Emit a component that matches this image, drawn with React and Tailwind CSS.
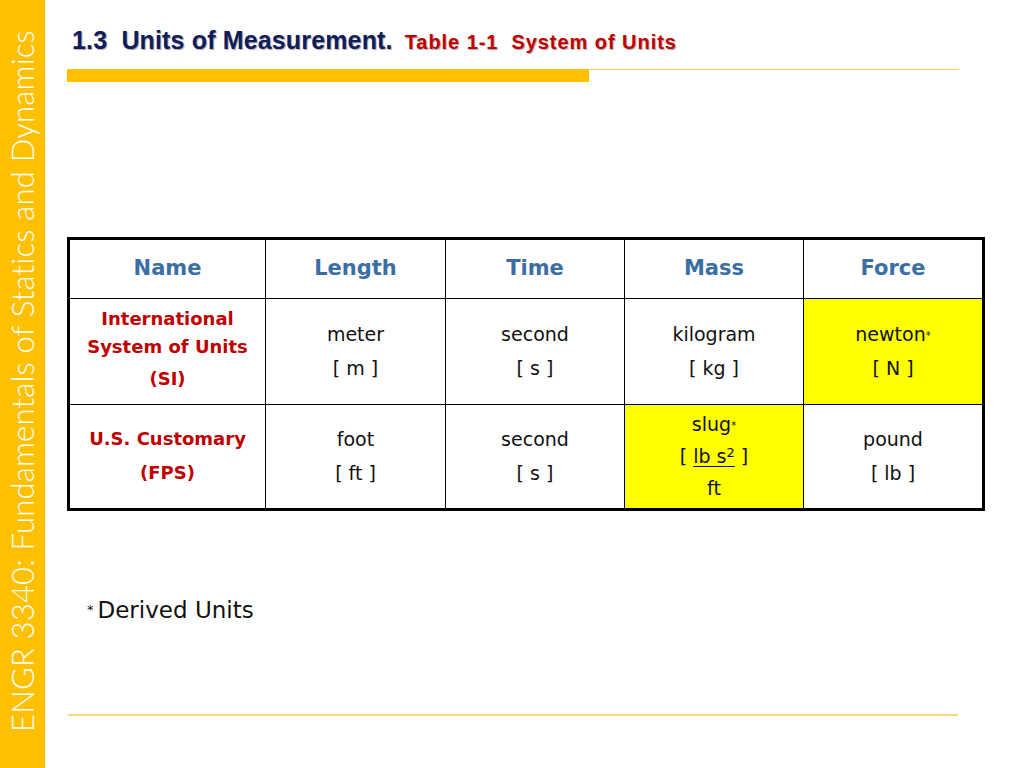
import React from "react";

const body = { fontFamily: '"DejaVu Sans", "Liberation Sans", sans-serif' };

function Cell({ children, yellow, className = "" }) {
  return (
    <td
      className={`border border-black text-center align-middle text-[19px] leading-[34px] text-[#111] ${yellow ? "bg-[#ffff00]" : "bg-white"} ${className}`}
      style={body}
    >
      {children}
    </td>
  );
}

function Head({ children }) {
  return (
    <th
      className="border border-black text-center align-middle text-[21px] font-bold text-[#3a6ea5] h-[60px]"
      style={body}
    >
      {children}
    </th>
  );
}

export default function App() {
  return (
    <div className="w-[1024px] h-[768px] flex bg-white overflow-hidden">
      <div className="w-[45px] h-full bg-[#ffc000] flex flex-col items-center justify-end pb-[36px] shrink-0">
        <div
          className="[writing-mode:vertical-rl] rotate-180 text-white text-[31px] leading-none whitespace-nowrap tracking-[0.2px]"
          style={{ fontFamily: '"Lato", "DejaVu Sans", sans-serif', fontWeight: 300 }}
        >
          ENGR 3340: Fundamentals of Statics and Dynamics
        </div>
      </div>
      <div className="flex-1 flex flex-col pl-[22px]">
        <div
          className="pt-[22px] pl-[5px] flex items-baseline whitespace-nowrap [text-shadow:1px_1px_1px_rgba(0,0,0,0.35)]"
          style={{ fontFamily: '"Liberation Sans", Arial, sans-serif' }}
        >
          <span className="text-[25px] font-bold text-[#0f1d5c] tracking-[0.15px]">1.3&nbsp; Units of Measurement.</span>
          <span className="ml-[12px] text-[20px] font-bold text-[#c00000] tracking-[0.95px]">Table 1-1&nbsp; System of Units</span>
        </div>
        <div className="mt-[9px] flex w-[892px]">
          <div className="w-[522px] h-[13px] bg-[#ffc000]"></div>
          <div className="flex-1 h-[1px] bg-[#f7d067]"></div>
        </div>
        <table className="mt-[155px] w-[915px] border-collapse border-[3px] border-black table-fixed">
          <colgroup>
            <col className="w-[197px]" />
            <col className="w-[180px]" />
            <col className="w-[179px]" />
            <col className="w-[179px]" />
            <col className="w-[180px]" />
          </colgroup>
          <thead>
            <tr>
              <Head>Name</Head>
              <Head>Length</Head>
              <Head>Time</Head>
              <Head>Mass</Head>
              <Head>Force</Head>
            </tr>
          </thead>
          <tbody>
            <tr className="h-[106px]">
              <td className="border border-black text-center align-middle text-[18px] font-bold text-[#c00000]" style={body}>
                <div className="leading-[28px]">International</div>
                <div className="leading-[28px]">System of Units</div>
                <div className="leading-[36px]">(SI)</div>
              </td>
              <Cell>
                <div>meter</div>
                <div>[ m ]</div>
              </Cell>
              <Cell>
                <div>second</div>
                <div>[ s ]</div>
              </Cell>
              <Cell>
                <div>kilogram</div>
                <div>[ kg ]</div>
              </Cell>
              <Cell yellow>
                <div>
                  newton<sup className="text-[10px] relative -top-[2px]">*</sup>
                </div>
                <div>[ N ]</div>
              </Cell>
            </tr>
            <tr className="h-[105px]">
              <td className="border border-black text-center align-middle text-[18px] font-bold text-[#c00000] leading-[34px]" style={body}>
                <div>U.S. Customary</div>
                <div>(FPS)</div>
              </td>
              <Cell>
                <div>foot</div>
                <div>[ ft ]</div>
              </Cell>
              <Cell>
                <div>second</div>
                <div>[ s ]</div>
              </Cell>
              <Cell yellow className="leading-[32px]">
                <div className="leading-[32px]">
                  slug<sup className="text-[10px] relative -top-[2px]">*</sup>
                </div>
                <div className="leading-[32px]">
                  [ <span className="underline underline-offset-[3px]">lb s<sup className="text-[13px]">2</sup></span> ]
                </div>
                <div className="leading-[32px]">ft</div>
              </Cell>
              <Cell>
                <div>pound</div>
                <div>[ lb ]</div>
              </Cell>
            </tr>
          </tbody>
        </table>
        <div className="mt-[85px] pl-[20px] text-[23px] leading-[28px] text-[#111] whitespace-nowrap" style={body}>
          <sup className="text-[13px] relative -top-[4px] mr-[4px]">*</sup>Derived Units
        </div>
        <div className="mt-[90px] ml-[1px] w-[890px] h-[2px] bg-[#f9d77a]"></div>
      </div>
    </div>
  );
}
